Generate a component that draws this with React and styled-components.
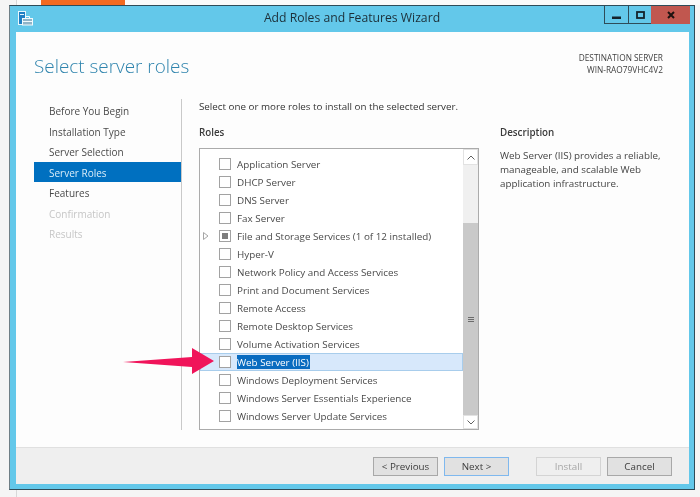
import React from "react";
import styled, { createGlobalStyle } from "styled-components";

const GlobalStyle = createGlobalStyle`
  html, body {
    margin: 0;
    padding: 0;
    background: #f5f5f5;
  }
  * {
    box-sizing: border-box;
  }
`;

const Page = styled.div`
  position: relative;
  width: 700px;
  height: 497px;
  overflow: hidden;
  background: #f5f5f5;
  font-family: "Open Sans", "Liberation Sans", sans-serif;
  font-size: 10px;
  color: #444;
  filter: blur(0.3px);
`;

const BehindStrip = styled.div`
  display: flex;
  height: 5px;
  margin-left: 16px;
  background: #fafafa;
  border-left: 1px solid #d8d8d8;
`;

const BehindTab = styled.div`
  margin-left: 24px;
  width: 84px;
  background: #f26a21;
`;

const BehindFoot = styled.div`
  height: 7px;
  margin-left: 16px;
  border-left: 1px solid #d8d8d8;
`;

const Window = styled.div`
  display: flex;
  flex-direction: column;
  margin-left: 9px;
  width: 686px;
  height: 485px;
  background: #63c8ea;
  border-top: 1px solid #2e4c59;
  border-left: 1px solid #6f7f86;
  border-right: 1px solid #2e4c59;
  border-bottom: 1px solid #2e4c59;
`;

const TitleBar = styled.div`
  position: relative;
  display: flex;
  align-items: flex-start;
  justify-content: space-between;
  height: 26px;
  flex: none;
`;

const AppIcon = styled.svg`
  margin: 5px 0 0 8px;
`;

const Title = styled.div`
  position: absolute;
  left: 0;
  right: 0;
  top: 3px;
  text-align: center;
  font-size: 12.2px;
  color: #1c2f38;
`;

const Controls = styled.div`
  display: flex;
  margin-right: 4px;
`;

const Control = styled.div`
  display: flex;
  align-items: center;
  justify-content: center;
  width: ${(p) => p.$w}px;
  height: 18px;
  background: ${(p) => p.$bg || "transparent"};
  border-left: ${(p) => (p.$bg ? "none" : "1px solid #2e4c59")};
  border-bottom: ${(p) => (p.$bg ? "none" : "1px solid #2e4c59")};
`;

const MinimizeGlyph = styled.svg`
  margin-top: 5px;
`;

const Client = styled.div`
  display: flex;
  flex-direction: column;
  flex: 1;
  margin: 0 5px 5px 6px;
  background: #fdfdfd;
`;

const Header = styled.div`
  display: flex;
  justify-content: space-between;
  height: 67px;
  padding: 20px 26px 0 18px;
  flex: none;
`;

const PageTitle = styled.div`
  font-size: 18.9px;
  font-weight: 300;
  line-height: 28px;
  color: #2f84ad;
`;

const Destination = styled.div`
  font-size: 8.3px;
  line-height: 11.5px;
  text-align: right;
  color: #3f3f3f;
`;

const Main = styled.div`
  display: flex;
  flex: 1;
`;

const Sidebar = styled.div`
  display: flex;
  flex-direction: column;
  width: 166px;
  height: 331px;
  padding-left: 18px;
  flex: none;
`;

const SidebarInner = styled.div`
  height: 100%;
  padding-top: 1px;
  border-right: 1px solid #c9c9c9;
`;

const Step = styled.div`
  height: 20.5px;
  line-height: 22.5px;
  padding-left: 15px;
  font-size: 10px;
  background: ${(p) => (p.$active ? "#0070c0" : "transparent")};
  color: ${(p) => (p.$active ? "#d8ecf8" : p.$disabled ? "#c6c6c6" : "#4a4a4a")};
`;

const Content = styled.div`
  display: grid;
  grid-template-columns: 280px 1fr;
  align-content: start;
  column-gap: 21px;
  padding-left: 17px;
  flex: 1;
`;

const Intro = styled.div`
  grid-column: 1 / 3;
  height: 20px;
  padding-top: 1px;
  font-size: 9.8px;
  line-height: 14px;
  color: #333;
`;

const ColumnHead = styled.div`
  height: 29px;
  padding-top: 7px;
  font-size: 9.8px;
  font-weight: 600;
  line-height: 14px;
  color: #3a3a3a;
`;

const ListBox = styled.div`
  display: flex;
  justify-content: space-between;
  grid-column: 1;
  width: 280px;
  height: 282px;
  border: 1px solid #ababab;
  background: #fff;
`;

const Rows = styled.div`
  flex: 1;
  padding-top: 6px;
`;

const Row = styled.div`
  display: flex;
  align-items: center;
  height: 18px;
  background: ${(p) => (p.$selected ? "#d7e8fb" : "transparent")};
  box-shadow: ${(p) => (p.$selected ? "inset 0 0 0 1px #a8cdec" : "none")};
`;

const Expander = styled.svg`
  margin-left: 3px;
  width: 6px;
  flex: none;
`;

const Check = styled.div`
  display: flex;
  align-items: center;
  justify-content: center;
  width: 12px;
  height: 12px;
  margin-left: ${(p) => (p.$plain ? 19 : 10)}px;
  border: 1px solid #a2a2a2;
  background: #fff;
  flex: none;
`;

const CheckFill = styled.div`
  width: 6px;
  height: 6px;
  background: #7d7d7d;
`;

const RowLabel = styled.span`
  margin-left: 6px;
  padding-right: 1px;
  font-size: 9.85px;
  line-height: 14px;
  color: ${(p) => (p.$selected ? "#fff" : "#4a4a4a")};
  background: ${(p) => (p.$selected ? "#0a6cc0" : "transparent")};
`;

const Scrollbar = styled.div`
  display: flex;
  flex-direction: column;
  width: 15px;
  background: #f0f0f0;
  flex: none;
`;

const ScrollButton = styled.div`
  display: flex;
  align-items: center;
  justify-content: center;
  height: ${(p) => p.$h}px;
  background: #fff;
  border: 1px solid #e2e2e2;
  flex: none;
`;

const ScrollGap = styled.div`
  height: 58px;
`;

const Thumb = styled.div`
  display: flex;
  align-items: center;
  justify-content: center;
  height: 192px;
  background: #c9c9c9;
`;

const Grip = styled.div`
  width: 6px;
  height: 5px;
  border-top: 1px solid #6b6b6b;
  border-bottom: 1px solid #6b6b6b;
  background: linear-gradient(#6b6b6b, #6b6b6b) center / 100% 1px no-repeat;
`;

const Description = styled.div`
  grid-column: 2;
  grid-row: 2 / 4;
`;

const DescriptionText = styled.div`
  width: 172px;
  padding-top: 1px;
  font-size: 9.8px;
  line-height: 14px;
  color: #444;
`;

const Footer = styled.div`
  display: flex;
  align-items: flex-start;
  height: 37px;
  padding: 9px 0 0 357px;
  background: #efefef;
  border-top: 1px solid #e0e0e0;
  flex: none;
`;

const Button = styled.div`
  display: flex;
  align-items: center;
  justify-content: center;
  width: 65px;
  height: 19px;
  margin-left: ${(p) => p.$gap || 0}px;
  font-size: 9.8px;
  background: ${(p) => (p.$disabled ? "#efefef" : "#e1e1e1")};
  border: 1px solid ${(p) => (p.$focus ? "#7fb8ee" : p.$disabled ? "#d4d4d4" : "#a8a8a8")};
  color: ${(p) => (p.$disabled ? "#a6a6a6" : "#3c3c3c")};
`;

const Arrow = styled.svg`
  position: absolute;
  left: 120px;
  top: 344px;
`;

const steps = [
  { label: "Before You Begin" },
  { label: "Installation Type" },
  { label: "Server Selection" },
  { label: "Server Roles", active: true },
  { label: "Features" },
  { label: "Confirmation", disabled: true },
  { label: "Results", disabled: true },
];

const roles = [
  "Application Server",
  "DHCP Server",
  "DNS Server",
  "Fax Server",
  "File and Storage Services (1 of 12 installed)",
  "Hyper-V",
  "Network Policy and Access Services",
  "Print and Document Services",
  "Remote Access",
  "Remote Desktop Services",
  "Volume Activation Services",
  "Web Server (IIS)",
  "Windows Deployment Services",
  "Windows Server Essentials Experience",
  "Windows Server Update Services",
];

const App = () => {
  return (
    <Page>
      <GlobalStyle />
      <BehindStrip>
        <BehindTab />
      </BehindStrip>
      <Window>
        <TitleBar>
          <AppIcon width="15" height="15" viewBox="0 0 15 15">
            <rect x="0.5" y="0.5" width="7" height="13" fill="#1f7fc4" stroke="#e8f6fb" />
            <rect x="2" y="3" width="4" height="1" fill="#e8f6fb" />
            <rect x="4.5" y="7.5" width="10" height="6.5" fill="#8fb4c8" stroke="#f2fafd" />
            <path d="M7.5 7.5V5.5h4v2M4.5 10.5h10" fill="none" stroke="#f2fafd" />
          </AppIcon>
          <Title>Add Roles and Features Wizard</Title>
          <Controls>
            <Control $w={24}>
              <MinimizeGlyph width="9" height="3" viewBox="0 0 9 3">
                <rect width="9" height="2.5" y="0.5" fill="#14232b" />
              </MinimizeGlyph>
            </Control>
            <Control $w={23}>
              <svg width="9" height="8" viewBox="0 0 9 8">
                <rect x="1" y="1" width="7" height="6" fill="none" stroke="#14232b" strokeWidth="1.8" />
              </svg>
            </Control>
            <Control $w={39} $bg="#c1574f">
              <svg width="8" height="8" viewBox="0 0 8 8">
                <path d="M1 1l6 6M7 1L1 7" stroke="#1d1210" strokeWidth="2" />
              </svg>
            </Control>
          </Controls>
        </TitleBar>
        <Client>
          <Header>
            <PageTitle>Select server roles</PageTitle>
            <Destination>
              DESTINATION SERVER
              <br />
              WIN-RAO79VHC4V2
            </Destination>
          </Header>
          <Main>
            <Sidebar>
              <SidebarInner>
                {steps.map((s) => (
                  <Step key={s.label} $active={s.active} $disabled={s.disabled}>
                    {s.label}
                  </Step>
                ))}
              </SidebarInner>
            </Sidebar>
            <Content>
              <Intro>Select one or more roles to install on the selected server.</Intro>
              <ColumnHead>Roles</ColumnHead>
              <Description>
                <ColumnHead>Description</ColumnHead>
                <DescriptionText>
                  Web Server (IIS) provides a reliable, manageable, and scalable Web
                  application infrastructure.
                </DescriptionText>
              </Description>
              <ListBox>
                <Rows>
                  {roles.map((r) => {
                    const selected = r === "Web Server (IIS)";
                    const partial = r.startsWith("File and");
                    return (
                      <Row key={r} $selected={selected}>
                        {partial && (
                          <Expander height="8" viewBox="0 0 6 8">
                            <path d="M0.5 0.5L5 4L0.5 7.5Z" fill="#fff" stroke="#a6a6a6" />
                          </Expander>
                        )}
                        <Check $plain={!partial}>{partial && <CheckFill />}</Check>
                        <RowLabel $selected={selected}>{r}</RowLabel>
                      </Row>
                    );
                  })}
                </Rows>
                <Scrollbar>
                  <ScrollButton $h={16}>
                    <svg width="8" height="5" viewBox="0 0 8 5">
                      <path d="M0.5 4.5L4 1l3.5 3.5" fill="none" stroke="#606060" />
                    </svg>
                  </ScrollButton>
                  <ScrollGap />
                  <Thumb>
                    <Grip />
                  </Thumb>
                  <ScrollButton $h={14}>
                    <svg width="8" height="5" viewBox="0 0 8 5">
                      <path d="M0.5 0.5L4 4l3.5-3.5" fill="none" stroke="#606060" />
                    </svg>
                  </ScrollButton>
                </Scrollbar>
              </ListBox>
            </Content>
          </Main>
          <Footer>
            <Button>&lt; Previous</Button>
            <Button $gap={6} $focus>
              Next &gt;
            </Button>
            <Button $gap={27} $disabled>
              Install
            </Button>
            <Button $gap={6}>Cancel</Button>
          </Footer>
        </Client>
      </Window>
      <BehindFoot />
      <Arrow width="100" height="36" viewBox="0 0 100 36">
        <path d="M3 18L72 13V4L94 17L72 30V23Z" fill="#f0145a" />
      </Arrow>
    </Page>
  );
};

export default App;
